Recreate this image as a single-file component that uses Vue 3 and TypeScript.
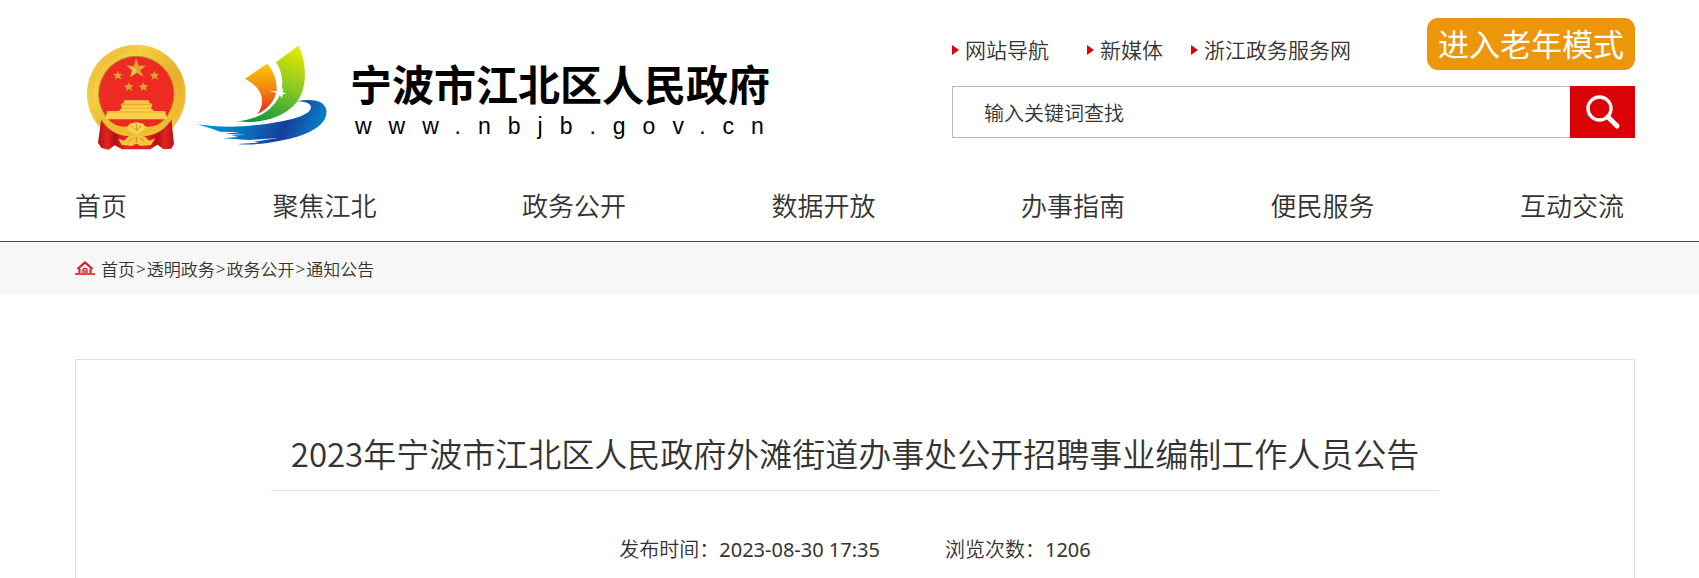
<script setup lang="ts">
import { ref } from 'vue'

const keyword = ref('输入关键词查找')
const quickLinks: string[] = ['网站导航', '新媒体', '浙江政务服务网']
const navItems: string[] = ['首页', '聚焦江北', '政务公开', '数据开放', '办事指南', '便民服务', '互动交流']
const crumbs: string[] = ['首页', '透明政务', '政务公开', '通知公告']
</script>

<template>
  <div class="page">
    <header class="header wrap">
      <a class="brand" href="#">
        <svg class="emblem" viewBox="0 0 330 345" aria-hidden="true">
          <defs>
            <linearGradient id="gold" x1="0" y1="0" x2="1" y2="1">
              <stop offset="0" stop-color="#e9b32c" />
              <stop offset=".3" stop-color="#f6cf45" />
              <stop offset=".6" stop-color="#e8b02b" />
              <stop offset="1" stop-color="#f5ca3c" />
            </linearGradient>
            <linearGradient id="drape" x1="0" y1="0" x2="1" y2="0">
              <stop offset="0" stop-color="#b80f12" />
              <stop offset=".12" stop-color="#e32420" />
              <stop offset=".22" stop-color="#b31114" />
              <stop offset=".35" stop-color="#e6231f" />
              <stop offset=".65" stop-color="#e6231f" />
              <stop offset=".78" stop-color="#b31114" />
              <stop offset=".88" stop-color="#e32420" />
              <stop offset="1" stop-color="#b80f12" />
            </linearGradient>
          </defs>
          <circle cx="163" cy="162" r="148" fill="url(#gold)" />
          <circle cx="163" cy="162" r="133" fill="none" stroke="#d99e22" stroke-width="3" stroke-dasharray="9 7" opacity=".35" />
          <circle cx="163" cy="162" r="113" fill="#ee2a24" stroke="#b9811d" stroke-width="3" />
          <path d="M58 236 Q90 285 143 289 L183 289 Q236 285 268 236 L276 312 L268 326 L245 328 L226 314 L205 328 L120 328 L98 316 L80 329 L58 324 L48 308Z" fill="url(#drape)" />
          <path d="M54 234 Q90 292 146 287 L163 270 L181 287 Q236 290 272 234 L251 241 Q215 267 182 258 L163 253 L144 258 Q111 267 77 241Z" fill="#efbd32" />
          <path d="M134 264 L143 251 L163 247 L184 251 L192 264 L182 273 L163 285 L145 273Z" fill="#f8d650" />
          <path d="M148 257 L160 270 M163 252 V274 M178 257 L166 270" stroke="#cf8e21" stroke-width="3" />
          <path d="M108 295 L126 302 L140 289 L163 285 L187 289 L202 302 L220 295 L207 315 L176 318 L163 311 L150 318 L119 315Z" fill="#f3c73d" />
          <path d="M140 304 L152 294 M163 291 V308 M187 304 L174 294" stroke="#c9821e" stroke-width="3" />
          <path d="M76 213 H110 L118 205 H207 L216 213 H249 L256 238 H69Z" fill="#f8d349" />
          <path d="M116 193 L125 188 L127 181 H200 L202 188 L211 193 L207 205 H120Z" fill="#f5cb43" />
          <path d="M118 193 H209 M76 216 H250" stroke="#e3a52c" stroke-width="3" />
          <g fill="#dba62e">
            <path d="M162 53 L170 77 L193 77 L175 91 L185 111 L164 98 L144 111 L151 91 L134 77 L156 77Z" />
            <path id="small-star" d="M107 92 L111 101 L121 102 L114 109 L118 119 L108 113 L99 119 L101 109 L93 103 L104 101Z" />
            <use href="#small-star" x="110" />
            <use href="#small-star" x="33" y="34" />
            <use href="#small-star" x="77" y="34" />
          </g>
          <path d="M162 53 L164 98 L144 111 L151 91 L134 77 L164 88Z" fill="#efc349" />
        </svg>
        <svg class="sail" viewBox="0 0 408 318" aria-hidden="true">
          <defs>
            <linearGradient id="orange" x1="0" y1="0" x2="0" y2="1">
              <stop offset="0" stop-color="#fcc800" />
              <stop offset=".5" stop-color="#f28612" />
              <stop offset="1" stop-color="#e62a17" />
            </linearGradient>
            <linearGradient id="green" x1=".7" y1="0" x2=".35" y2="1">
              <stop offset="0" stop-color="#dfe600" />
              <stop offset=".45" stop-color="#8cc924" />
              <stop offset="1" stop-color="#139b3a" />
            </linearGradient>
            <linearGradient id="blue" x1="0" y1="0" x2="1" y2=".15">
              <stop offset="0" stop-color="#00a3df" />
              <stop offset=".45" stop-color="#0973bf" />
              <stop offset=".75" stop-color="#173f9c" />
              <stop offset="1" stop-color="#087bc5" />
            </linearGradient>
          </defs>
          <path d="M153 110 L220 65 C241 91 249 117 248 145 C242 180 220 201 190 217 C212 187 215 143 153 110Z" fill="url(#orange)" />
          <path d="M246 61 L313 11 C336 55 342 126 314 172 C287 215 220 249 128 238 C184 233 225 212 250 174 C273 137 268 94 246 61Z" fill="url(#green)" />
          <path d="M225 146 L252 148 L268 138 L266 150 L277 155 L267 157 L264 168 L256 158 L245 162 L249 153Z" fill="#fff" />
          <path d="M10 247 C74 256 137 256 197 248 C260 240 345 226 351 197 C352 185 337 179 310 178 C351 169 392 175 397 204 C403 251 337 281 273 293 C222 304 172 311 130 306 L196 302 L180 299 L250 288 L165 294 L87 289 L133 285 L111 280 L157 279 L90 275 L138 271 L78 269 L49 259Z" fill="url(#blue)" />
        </svg>
        <span class="brand-text">
          <span class="brand-name">宁波市江北区人民政府</span>
          <span class="brand-url">www.nbjb.gov.cn</span>
        </span>
      </a>

      <div class="tools">
        <div class="tools-top">
          <ul class="quick">
            <li v-for="link in quickLinks" :key="link"><a href="#">{{ link }}</a></li>
          </ul>
          <button class="senior" type="button">进入老年模式</button>
        </div>
        <form class="search" role="search" @submit.prevent>
          <input v-model="keyword" type="text" aria-label="输入关键词查找" />
          <button type="submit" aria-label="搜索">
            <svg viewBox="0 0 65 52" aria-hidden="true">
              <circle cx="29.5" cy="22.5" r="11.5" />
              <path d="M38 31 L47 40" />
            </svg>
          </button>
        </form>
      </div>
    </header>

    <nav class="nav wrap">
      <a v-for="item in navItems" :key="item" href="#">{{ item }}</a>
    </nav>

    <div class="crumb-bar">
      <nav class="crumbs wrap" aria-label="面包屑">
        <svg class="home" viewBox="0 0 20 14" aria-hidden="true">
          <path d="M0 13 H20" stroke-width="1.6" />
          <path d="M2.5 8 L10 1.5 L17.5 8" stroke-width="2.2" />
          <path d="M4.5 8 V12 M15.5 8 V12" stroke-width="2" />
          <path d="M8 12 V8.5 Q8 7.5 10 7.5 Q12 7.5 12 8.5 V12 M10 9 V12" stroke-width="1.3" />
        </svg>
        <template v-for="(crumb, i) in crumbs" :key="crumb">
          <span v-if="i > 0" class="sep">&gt;</span>
          <a href="#">{{ crumb }}</a>
        </template>
      </nav>
    </div>

    <main class="main wrap">
      <article class="article">
        <h1>2023年宁波市江北区人民政府外滩街道办事处公开招聘事业编制工作人员公告</h1>
        <p class="meta">
          <span>发布时间：<time datetime="2023-08-30T17:35">2023-08-30 17:35</time></span>
          <span>浏览次数：<span class="count">1206</span></span>
        </p>
      </article>
    </main>
  </div>
</template>

<style>
body {
  margin: 0;
  background: #fff;
}
</style>

<style scoped>
.page {
  color: #333;
  font-family: "Noto Sans", "Noto Sans CJK SC", sans-serif;
  font-weight: 350;
  height: 100vh;
  overflow: hidden;
  display: flex;
  flex-direction: column;
}
a {
  color: inherit;
  text-decoration: none;
}
button,
input {
  font: inherit;
  color: inherit;
  border: 0;
  margin: 0;
  padding: 0;
  border-radius: 0;
}
.wrap {
  box-sizing: border-box;
  padding-left: 75px;
  padding-right: 64px;
}
.header {
  display: flex;
  justify-content: space-between;
  flex: none;
  height: 172px;
}
.brand {
  display: flex;
  align-items: flex-start;
  padding: 40px 0 0 7px;
}
.emblem {
  width: 110px;
  height: 115px;
}
.sail {
  width: 136px;
  height: 106px;
  margin: 2px 0 0 2px;
}
.brand-text {
  display: flex;
  flex-direction: column;
  margin: 20px 0 0 20px;
  color: #000;
  white-space: nowrap;
}
.brand-name {
  font-size: 42px;
  line-height: 50px;
  font-weight: 700;
}
.brand-url {
  font-family: "Liberation Sans", sans-serif;
  font-size: 23px;
  line-height: 32px;
  font-weight: 400;
  letter-spacing: 17px;
  padding-left: 5px;
}
.tools {
  width: 683px;
  padding-top: 18px;
}
.tools-top {
  display: flex;
  justify-content: space-between;
  height: 52px;
  margin-bottom: 16px;
}
.quick {
  display: grid;
  grid-template-columns: 135px 104px auto;
  align-items: center;
  margin: 0;
  padding: 0;
  list-style: none;
  font-size: 21px;
  line-height: 52px;
  height: 64px;
}
.quick li {
  display: flex;
  align-items: center;
  gap: 6px;
  white-space: nowrap;
}
.quick li::before {
  content: "";
  border-left: 7px solid #dc0007;
  border-top: 5px solid transparent;
  border-bottom: 5px solid transparent;
}
.senior {
  width: 208px;
  border-radius: 11px;
  background: #ec960c;
  color: #fff;
  font-size: 31px;
  font-weight: 400;
  line-height: 52px;
  white-space: nowrap;
  cursor: pointer;
}
.search {
  display: flex;
  height: 52px;
}
.search input {
  flex: 1;
  min-width: 0;
  box-sizing: border-box;
  border: 1px solid #bbb;
  border-right: 0;
  padding: 0 31px;
  font-size: 20px;
  background: #fff;
  outline: none;
}
.search button {
  width: 65px;
  background: #dc0007;
  cursor: pointer;
}
.search svg {
  display: block;
  width: 65px;
  height: 52px;
  fill: none;
  stroke: #fff;
  stroke-width: 3.4;
  stroke-linecap: round;
}
.search path {
  stroke-width: 5;
}
.nav {
  display: flex;
  flex: none;
  justify-content: space-between;
  padding-right: 75px;
  font-size: 26px;
  line-height: 69px;
  border-bottom: 1px solid #cf0a10;
}
.crumb-bar {
  flex: none;
  background: #f7f7f7;
}
.crumbs {
  display: flex;
  align-items: center;
  height: 52px;
  font-size: 17px;
}
.home {
  width: 20px;
  height: 14px;
  margin-right: 6px;
  fill: none;
  stroke: #dc1720;
}
.sep {
  margin: 0 1px;
}
.main {
  display: flex;
  flex: 1;
  padding-top: 65px;
}
.article {
  flex: 1;
  border: 1px solid #e1e1e1;
  border-bottom: 0;
  padding-top: 62px;
}
h1 {
  width: 75%;
  margin: 0 auto;
  padding-bottom: 6px;
  border-bottom: 1px solid #e1e1e1;
  font-family: "Noto Sans CJK SC", sans-serif;
  font-size: 33px;
  line-height: 62px;
  font-weight: 350;
  text-align: center;
  white-space: nowrap;
}
.meta {
  display: flex;
  justify-content: center;
  gap: 65px;
  margin: 44px 0 0;
  font-size: 20px;
  line-height: 30px;
}
.meta time,
.count {
  font-weight: 400;
}
</style>
